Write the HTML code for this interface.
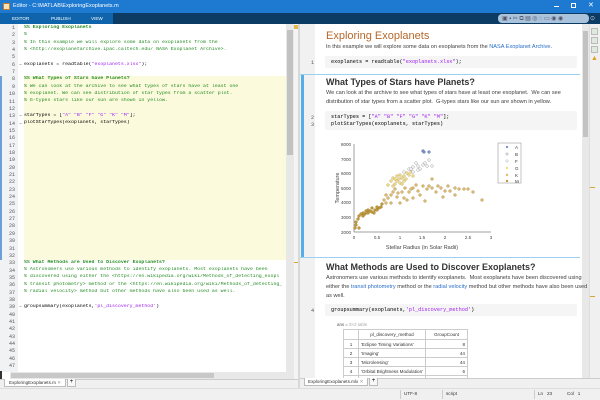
<!DOCTYPE html>
<html><head><meta charset="utf-8"><style>
*{margin:0;padding:0;box-sizing:border-box}
body{width:600px;height:400px;overflow:hidden;position:relative;background:#f0f0f0;font-family:"Liberation Sans",sans-serif}
.a{position:absolute}
.mono{font-family:"Liberation Mono",monospace;font-size:5.2px;white-space:pre}
.ln{position:absolute;left:4px;width:11px;text-align:right;font-family:"Liberation Mono",monospace;font-size:5px;color:#555}
.cl{position:absolute;left:24px;font-family:"Liberation Mono",monospace;font-size:4.9px;white-space:pre;color:#000;max-width:262px;overflow:hidden}
.g{color:#228b22}.gb{color:#228b22;font-weight:bold}.p{color:#a020f0}
.pr{position:absolute;left:326px;font-size:5.6px;color:#404040;white-space:nowrap}
.lk{color:#2a6fc9}
.cb{position:absolute;left:325px;width:252px;background:#f5f5f5;border-radius:2px}
table{border-collapse:collapse;font-size:4.6px;color:#333}
td{border:1px solid #ccc;height:9px;padding:0 2px}
</style></head><body>
<div class="a" style="left:0;top:0;width:600px;height:13px;background:#1e7ad1"></div>
<div class="a" style="left:3px;top:3px;width:7px;height:7px;background:#f5e2b8;border:1px solid #c87a2a"></div>
<div class="a" style="left:13px;top:3px;font-size:5.5px;color:#fff">Editor - C:\MATLAB\ExploringExoplanets.m</div>
<div class="a" style="left:554px;top:6px;width:5px;height:1px;background:#fff"></div>
<div class="a" style="left:571px;top:3px;width:5px;height:5px;border:1px solid #fff"></div>
<div class="a" style="left:588px;top:1px;font-size:7px;color:#fff">✕</div>
<div class="a" style="left:0;top:13px;width:600px;height:11px;background:#0c3b63"></div>
<div class="a" style="left:0;top:13px;width:113px;height:11px;background:#0f64ab"></div>
<div class="a" style="left:12px;top:16px;font-size:4.6px;color:#fff">EDITOR</div>
<div class="a" style="left:51px;top:16px;font-size:4.6px;color:#fff">PUBLISH</div>
<div class="a" style="left:91px;top:16px;font-size:4.6px;color:#fff">VIEW</div>
<div class="a" style="left:498px;top:14px;width:91px;height:9px;background:#a9c3dc;border-radius:4px"></div>
<div class="a" style="left:502px;top:15px;font-size:6px;color:#556;letter-spacing:1.5px;white-space:nowrap">▣▪✂⧉▤◎◌▭◉◉</div>
<div class="a" style="left:590px;top:15px;font-size:6px;color:#ccd">⊙</div>

<div class="a" style="left:0;top:24px;width:298px;height:356px;background:#fff"></div>
<div class="a" style="left:0;top:24px;width:18px;height:348px;background:#f1f2f4"></div>
<div class="a" style="left:0;top:76px;width:2px;height:184px;background:#6a9fd8"></div>
<div class="a" style="left:24px;top:76px;width:262px;height:184px;background:#fbfadc"></div>
<div class="a" style="left:286px;top:24px;width:8px;height:348px;background:#e8e8e8"></div>
<div class="a" style="left:287px;top:30px;width:6px;height:125px;background:#c2c2c2"></div>
<div class="a" style="left:294px;top:24px;width:4px;height:356px;background:#f4f4f4"></div>
<div class="a" style="left:294px;top:25px;width:4px;height:4px;background:#e2b84a"></div>
<div class="a" style="left:294px;top:262px;width:4px;height:1px;background:#d8a43a"></div>
<div class="a" style="left:10px;top:372px;width:284px;height:7px;background:#e8e8e8"></div>
<div class="a" style="left:11px;top:373px;width:203px;height:5px;background:#c8c8c8"></div>
<div class="a" style="left:0;top:371px;width:2px;height:8px;background:#333"></div>

<div id="lns"></div>
<div class="cl gb" style="top:25px">%% Exploring Exoplanets</div>
<div class="cl g" style="top:32px">%</div>
<div class="cl g" style="top:40px">% In this example we will explore some data on exoplanets from the</div>
<div class="cl g" style="top:47px">% &lt;http://exoplanetarchive.ipac.caltech.edu/ NASA Exoplanet Archive&gt;.</div>
<div class="cl" style="top:62px">exoplanets = readtable(<span class="p">"exoplanets.xlsx"</span>);</div>
<div class="cl gb" style="top:76px">%% What Types of Stars have Planets?</div>
<div class="cl g" style="top:84px">% We can look at the archive to see what types of stars have at least one</div>
<div class="cl g" style="top:91px">% exoplanet. We can see distribution of star types from a scatter plot.</div>
<div class="cl g" style="top:98px">% G-types stars like our sun are shown in yellow.</div>
<div class="cl" style="top:113px">starTypes = [<span class="p">"A" "B" "F" "G" "K" "M"</span>];</div>
<div class="cl" style="top:120px">plotStarTypes(exoplanets, starTypes)</div>
<div class="cl gb" style="top:260px">%% What Methods are Used to Discover Exoplanets?</div>
<div class="cl g" style="top:267px">% Astronomers use various methods to identify exoplanets. Most exoplanets have been</div>
<div class="cl g" style="top:274px">% discovered using either the &lt;https://en.wikipedia.org/wiki/Methods_of_detecting_exopl</div>
<div class="cl g" style="top:282px">% transit photometry&gt; method or the &lt;https://en.wikipedia.org/wiki/Methods_of_detecting_</div>
<div class="cl g" style="top:289px">% radial velocity&gt; method but other methods have also been used as well.</div>
<div class="cl" style="top:304px">groupsummary(exoplanets,<span class="p">'pl_discovery_method'</span>)</div>

<div class="a" style="left:0;top:379px;width:298px;height:9px;background:#f0f0f0;border-top:1px solid #ccc"></div>
<div class="a" style="left:4px;top:379px;width:62px;height:8px;background:#fff;border:1px solid #bbb;border-top:none;font-size:4.6px;padding:1px 0 0 4px;color:#333;white-space:nowrap">ExploringExoplanets.m <span style="color:#999">✕</span></div>
<div class="a" style="left:67px;top:379px;width:9px;height:8px;background:#f8f8f8;border:1px solid #bbb;border-top:none;font-size:6px;text-align:center;line-height:7px">+</div>

<div class="a" style="left:298px;top:24px;width:2px;height:364px;background:#d8d8d8"></div>

<div class="a" style="left:300px;top:24px;width:282px;height:354px;background:#fff"></div>
<div class="a" style="left:300px;top:24px;width:15px;height:354px;background:#f1f1f1"></div>
<div class="a" style="left:300px;top:74px;width:280px;height:1px;background:#9dd0ef"></div>
<div class="a" style="left:300px;top:257px;width:280px;height:1px;background:#9dd0ef"></div>
<div class="a" style="left:301px;top:75px;width:3px;height:182px;background:#55aee8"></div>
<div class="a" style="left:582px;top:24px;width:7px;height:354px;background:#e8e8e8"></div>
<div class="a" style="left:583px;top:31px;width:5px;height:106px;background:#c2c2c2"></div>
<div class="a" style="left:589px;top:24px;width:11px;height:356px;background:#f0f0f0;border-left:1px solid #ddd"></div>
<div class="a" style="left:591px;top:28px;width:7px;height:7px;background:#dfe9e0;border:1px solid #bbb"></div>
<div class="a" style="left:591px;top:37px;width:7px;height:7px;background:#dfe9e0;border:1px solid #bbb"></div>
<div class="a" style="left:591px;top:46px;width:7px;height:7px;background:#dfe9e0;border:1px solid #bbb"></div>
<div class="a" style="left:591px;top:55px;font-size:7px;color:#e0a020">▲</div>
<div class="a" style="left:590px;top:187px;width:5px;height:1px;background:#d8a43a"></div>
<div class="a" style="left:590px;top:296px;width:5px;height:1px;background:#d8a43a"></div>

<div class="a" style="left:326px;top:30px;font-size:11px;color:#b5682a">Exploring Exoplanets</div>
<div class="pr" style="top:44px">In this example we will explore some data on exoplanets from the <span class="lk">NASA Exoplanet Archive</span>.</div>
<div class="cb" style="top:56px;height:12px"></div>
<div class="a mono" style="left:311px;top:60px;color:#555">1</div>
<div class="a mono" style="left:331px;top:59px">exoplanets = readtable(<span class="p">"exoplanets.xlsx"</span>);</div>

<div class="a" style="left:326px;top:77px;font-size:9px;font-weight:bold;color:#333">What Types of Stars have Planets?</div>
<div class="pr" style="top:90px">We can look at the archive to see what types of stars have at least one exoplanet.&nbsp; We can see</div>
<div class="pr" style="top:99px">distribution of star types from a scatter plot.&nbsp; G-types stars like our sun are shown in yellow.</div>
<div class="cb" style="top:111px;height:19px"></div>
<div class="a mono" style="left:311px;top:115px;color:#555">2</div>
<div class="a mono" style="left:311px;top:122px;color:#555">3</div>
<div class="a mono" style="left:331px;top:114px">starTypes = [<span class="p">"A" "B" "F" "G" "K" "M"</span>];</div>
<div class="a mono" style="left:331px;top:121px">plotStarTypes(exoplanets, starTypes)</div>

<svg class="a" style="left:300px;top:130px" width="282" height="125" viewBox="300 130 282 125">
<g font-family="Liberation Sans" font-size="4.5" fill="#444">
<line x1="354" y1="144" x2="354" y2="232" stroke="#444" stroke-width="0.5"/>
<line x1="354" y1="232" x2="491" y2="232" stroke="#444" stroke-width="0.5"/>
<text x="351" y="146" text-anchor="end">8000</text><text x="351" y="161" text-anchor="end">7000</text>
<text x="351" y="175" text-anchor="end">6000</text><text x="351" y="190" text-anchor="end">5000</text>
<text x="351" y="204" text-anchor="end">4000</text><text x="351" y="219" text-anchor="end">3000</text>
<text x="351" y="234" text-anchor="end">2000</text>
<text x="354" y="239" text-anchor="middle">0</text><text x="377" y="239" text-anchor="middle">0.5</text>
<text x="400" y="239" text-anchor="middle">1</text><text x="422" y="239" text-anchor="middle">1.5</text>
<text x="445" y="239" text-anchor="middle">2</text><text x="468" y="239" text-anchor="middle">2.5</text>
<text x="491" y="239" text-anchor="middle">3</text>
<text x="422" y="249" text-anchor="middle" font-size="5.5">Stellar Radius (in Solar Radii)</text>
<text transform="translate(339,188) rotate(-90)" text-anchor="middle" font-size="5.5">Temperature</text>
</g>
<g stroke-width="0.4" stroke="#9a7a2a" fill="#c49a3a">
<circle cx="355" cy="228" r="1.4"/><circle cx="356" cy="225" r="1.4"/><circle cx="359" cy="228" r="1.4"/><circle cx="356" cy="222" r="1.4"/><circle cx="358" cy="219" r="1.4"/><circle cx="359" cy="216" r="1.4"/><circle cx="363" cy="216" r="1.4"/><circle cx="365" cy="214" r="1.4"/><circle cx="368" cy="213" r="1.4"/><circle cx="370" cy="211" r="1.4"/><circle cx="372" cy="212" r="1.4"/><circle cx="375" cy="210" r="1.4"/><circle cx="377" cy="210" r="1.4"/><circle cx="379" cy="208" r="1.4"/><circle cx="381" cy="207" r="1.4"/><circle cx="382" cy="204" r="1.4"/><circle cx="368" cy="210" r="1.4"/><circle cx="372" cy="208" r="1.4"/><circle cx="377" cy="207" r="1.4"/><circle cx="363" cy="213" r="1.4"/><circle cx="361" cy="214" r="1.4"/><circle cx="366" cy="211" r="1.4"/><circle cx="374" cy="213" r="1.4"/>
</g>
<g stroke-width="0.4" stroke="#b09050" fill="#dcbc70">
<circle cx="386" cy="203" r="1.4"/><circle cx="388" cy="198" r="1.4"/><circle cx="391" cy="195" r="1.4"/><circle cx="393" cy="192" r="1.4"/><circle cx="395" cy="189" r="1.4"/><circle cx="386" cy="195" r="1.4"/><circle cx="391" cy="203" r="1.4"/><circle cx="384" cy="200" r="1.4"/><circle cx="400" cy="203" r="1.4"/><circle cx="404" cy="198" r="1.4"/><circle cx="409" cy="192" r="1.4"/><circle cx="413" cy="188" r="1.4"/><circle cx="418" cy="191" r="1.4"/><circle cx="423" cy="186" r="1.4"/><circle cx="427" cy="189" r="1.4"/><circle cx="432" cy="188" r="1.4"/><circle cx="436" cy="192" r="1.4"/><circle cx="441" cy="188" r="1.4"/><circle cx="445" cy="191" r="1.4"/><circle cx="450" cy="191" r="1.4"/><circle cx="455" cy="195" r="1.4"/><circle cx="459" cy="189" r="1.4"/><circle cx="464" cy="189" r="1.4"/><circle cx="468" cy="189" r="1.4"/><circle cx="473" cy="192" r="1.4"/><circle cx="482" cy="200" r="1.4"/><circle cx="425" cy="201" r="1.4"/><circle cx="413" cy="198" r="1.4"/><circle cx="407" cy="200" r="1.4"/><circle cx="397" cy="197" r="1.4"/><circle cx="416" cy="185" r="1.4"/><circle cx="432" cy="179" r="1.4"/><circle cx="420" cy="195" r="1.4"/><circle cx="402" cy="192" r="1.4"/><circle cx="411" cy="189" r="1.4"/><circle cx="455" cy="188" r="1.4"/><circle cx="443" cy="197" r="1.4"/><circle cx="429" cy="186" r="1.4"/><circle cx="438" cy="186" r="1.4"/><circle cx="448" cy="186" r="1.4"/><circle cx="405" cy="188" r="1.4"/><circle cx="398" cy="193" r="1.4"/>
</g>
<g stroke-width="0.4" stroke="#bba860" fill="#eedc8a">
<circle cx="388" cy="185" r="1.4"/><circle cx="391" cy="181" r="1.4"/><circle cx="393" cy="178" r="1.4"/><circle cx="395" cy="179" r="1.4"/><circle cx="397" cy="176" r="1.4"/><circle cx="400" cy="175" r="1.4"/><circle cx="402" cy="178" r="1.4"/><circle cx="404" cy="176" r="1.4"/><circle cx="407" cy="173" r="1.4"/><circle cx="409" cy="175" r="1.4"/><circle cx="411" cy="172" r="1.4"/><circle cx="395" cy="184" r="1.4"/><circle cx="400" cy="183" r="1.4"/><circle cx="404" cy="181" r="1.4"/><circle cx="393" cy="186" r="1.4"/><circle cx="413" cy="176" r="1.4"/><circle cx="397" cy="181" r="1.4"/><circle cx="402" cy="184" r="1.4"/><circle cx="406" cy="179" r="1.4"/><circle cx="399" cy="179" r="1.4"/>
</g>
<g stroke-width="0.4" stroke="#999" fill="#f4f4f4">
<circle cx="404" cy="172" r="1.4"/><circle cx="409" cy="169" r="1.4"/><circle cx="413" cy="167" r="1.4"/><circle cx="418" cy="166" r="1.4"/><circle cx="420" cy="169" r="1.4"/><circle cx="423" cy="165" r="1.4"/><circle cx="425" cy="163" r="1.4"/><circle cx="427" cy="166" r="1.4"/><circle cx="429" cy="160" r="1.4"/><circle cx="418" cy="170" r="1.4"/><circle cx="413" cy="172" r="1.4"/><circle cx="432" cy="166" r="1.4"/><circle cx="411" cy="169" r="1.4"/><circle cx="416" cy="163" r="1.4"/>
</g>
<g fill="#7f96cc" stroke="#5a70a8" stroke-width="0.4">
<circle cx="423" cy="151" r="1.4"/><circle cx="424" cy="152" r="1.4"/><circle cx="429" cy="152" r="1.4"/>
</g>
<rect x="498" y="143" width="23" height="40" fill="#fff" stroke="#888" stroke-width="0.5"/>
<g font-family="Liberation Sans" font-size="4.5" fill="#333">
<circle cx="507" cy="147" r="1.2" fill="#7f96cc"/><text x="515" y="149">A</text>
<circle cx="507" cy="154" r="1.2" fill="#dde" stroke="#99a" stroke-width="0.4"/><text x="515" y="156">B</text>
<circle cx="507" cy="161" r="1.2" fill="#fff" stroke="#999" stroke-width="0.4"/><text x="515" y="163">F</text>
<circle cx="507" cy="168" r="1.2" fill="#eedc8a"/><text x="515" y="170">G</text>
<circle cx="507" cy="175" r="1.2" fill="#dcbc70"/><text x="515" y="177">K</text>
<circle cx="507" cy="181" r="1.2" fill="#c49a3a"/><text x="515" y="183">M</text>
</g>
</svg>

<div class="a" style="left:326px;top:262px;font-size:9px;font-weight:bold;color:#333">What Methods are Used to Discover Exoplanets?</div>
<div class="pr" style="top:275px">Astronomers use various methods to identify exoplanets.&nbsp; Most exoplanets have been discovered using</div>
<div class="pr" style="top:284px">either the <span class="lk">transit photometry</span> method or the <span class="lk">radial velocity</span> method but other methods have also been used</div>
<div class="pr" style="top:293px">as well.</div>
<div class="cb" style="top:304px;height:12px"></div>
<div class="a mono" style="left:311px;top:308px;color:#555">4</div>
<div class="a mono" style="left:331px;top:307px">groupsummary(exoplanets,<span class="p">'pl_discovery_method'</span>)</div>
<div class="a" style="left:337px;top:322px;font-size:4.4px;color:#555">ans = <span style="color:#aaa">8×2 table</span></div>
<table class="a" style="left:343px;top:329px;width:125px">
<tr style="height:10px"><td style="width:15px"></td><td style="width:67px;text-align:center">pl_discovery_method</td><td style="text-align:center">GroupCount</td></tr>
<tr><td style="text-align:center">1</td><td>'Eclipse Timing Variations'</td><td style="text-align:right">8</td></tr>
<tr><td style="text-align:center">2</td><td>'Imaging'</td><td style="text-align:right">44</td></tr>
<tr><td style="text-align:center">3</td><td>'Microlensing'</td><td style="text-align:right">44</td></tr>
<tr><td style="text-align:center">4</td><td>'Orbital Brightness Modulation'</td><td style="text-align:right">6</td></tr>
<tr><td style="text-align:center">5</td><td>'Pulsar Timing'</td><td style="text-align:right">6</td></tr>
</table>
<div class="a" style="left:300px;top:378px;width:300px;height:10px;background:#f0f0f0;border-top:1px solid #ccc"></div>
<div class="a" style="left:304px;top:378px;width:64px;height:8px;background:#fff;border:1px solid #bbb;border-top:none;font-size:4.6px;padding:1px 0 0 3px;color:#333;white-space:nowrap">ExploringExoplanets.mlx <span style="color:#999">✕</span></div>
<div class="a" style="left:369px;top:378px;width:9px;height:8px;background:#f8f8f8;border:1px solid #bbb;border-top:none;font-size:6px;text-align:center;line-height:7px">+</div>
<div class="a" style="left:0;top:388px;width:600px;height:12px;background:#f0f0f0;border-top:1px solid #ddd"></div>
<div class="a" style="left:400px;top:390px;width:200px;height:9px;border-left:1px solid #ccc;font-size:4.6px;color:#333;padding:1px 0 0 3px">UTF-8</div>
<div class="a" style="left:442px;top:390px;height:9px;border-left:1px solid #ccc;font-size:4.6px;color:#333;padding:1px 0 0 3px">script</div>
<div class="a" style="left:534px;top:390px;height:9px;border-left:1px solid #ccc;font-size:4.6px;color:#333;padding:1px 0 0 3px">Ln&nbsp;&nbsp; 23</div>
<div class="a" style="left:567px;top:391px;font-size:4.6px;color:#333">Col&nbsp;&nbsp; 1</div>
<script>
var s='';for(var i=1;i<=47;i++){var y=25+(i-1)*7.35;s+='<div class="ln" style="top:'+y+'px">'+i+'</div>';}
[6,13,14,39].forEach(function(n){s+='<div class="ln" style="left:16px;width:6px;top:'+(25+(n-1)*7.35)+'px">–</div>';});
document.getElementById('lns').innerHTML=s;
</script>
</body></html>
